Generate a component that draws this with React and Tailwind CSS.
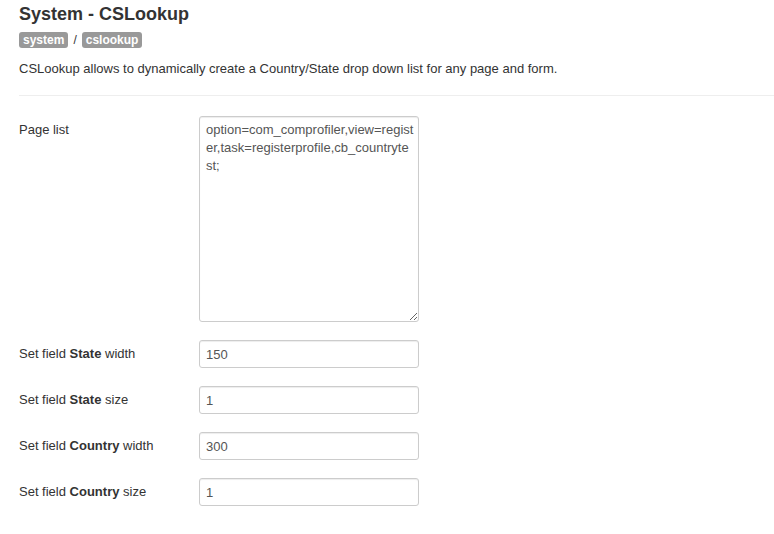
import React from "react";

const fields = [
  { pre: "Set field ", bold: "State", post: " width", value: "150" },
  { pre: "Set field ", bold: "State", post: " size", value: "1" },
  { pre: "Set field ", bold: "Country", post: " width", value: "300" },
  { pre: "Set field ", bold: "Country", post: " size", value: "1" },
];

const App = () => {
  return (
    <div
      className="min-h-[534px] bg-white pl-[19px] pt-[3px] text-[13px] text-[#333]"
      style={{ fontFamily: '"Liberation Sans", Arial, sans-serif' }}
    >
      {/* Header */}
      <h2 className="text-[18px] font-bold leading-[22px] text-[#333]">System - CSLookup</h2>
      <div className="mt-[7px] flex items-center gap-[5px] text-[12px] leading-[16px]">
        <span className="rounded-[3px] bg-[#999] px-[4px] font-bold text-white">system</span>
        <span className="text-[#333]">/</span>
        <span className="rounded-[3px] bg-[#999] px-[4px] font-bold text-white">cslookup</span>
      </div>
      <p className="mt-[12px] leading-[18px]">
        CSLookup allows to dynamically create a Country/State drop down list for any page and form.
      </p>
      <hr className="mt-[17px] border-0 border-t border-[#eee]" />

      {/* Form */}
      <div className="mt-[20px] flex">
        <label className="w-[180px] shrink-0 pt-[5px] leading-[18px]">Page list</label>
        <textarea
          className="h-[206px] w-[220px] resize rounded-[3px] border border-[#ccc] py-[4px] pl-[6px] pr-[3px] text-[13px] leading-[18px] text-[#555] shadow-[inset_0_1px_1px_rgba(0,0,0,0.075)] outline-none"
          style={{ fontFamily: '"Liberation Sans", Arial, sans-serif' }}
          defaultValue="option=com_comprofiler,view=register,task=registerprofile,cb_countrytest;"
        />
      </div>

      <div className="mt-[18px] flex flex-col gap-[18px]">
        {fields.map((f, i) => (
          <div key={i} className="flex items-center">
            <label className="w-[180px] shrink-0 leading-[18px]">
              {f.pre}
              <b>{f.bold}</b>
              {f.post}
            </label>
            <input
              type="text"
              defaultValue={f.value}
              className="h-[28px] w-[220px] rounded-[3px] border border-[#ccc] px-[6px] text-[13px] text-[#555] shadow-[inset_0_1px_1px_rgba(0,0,0,0.075)] outline-none"
              style={{ fontFamily: '"Liberation Sans", Arial, sans-serif' }}
            />
          </div>
        ))}
      </div>
    </div>
  );
};

export default App;
